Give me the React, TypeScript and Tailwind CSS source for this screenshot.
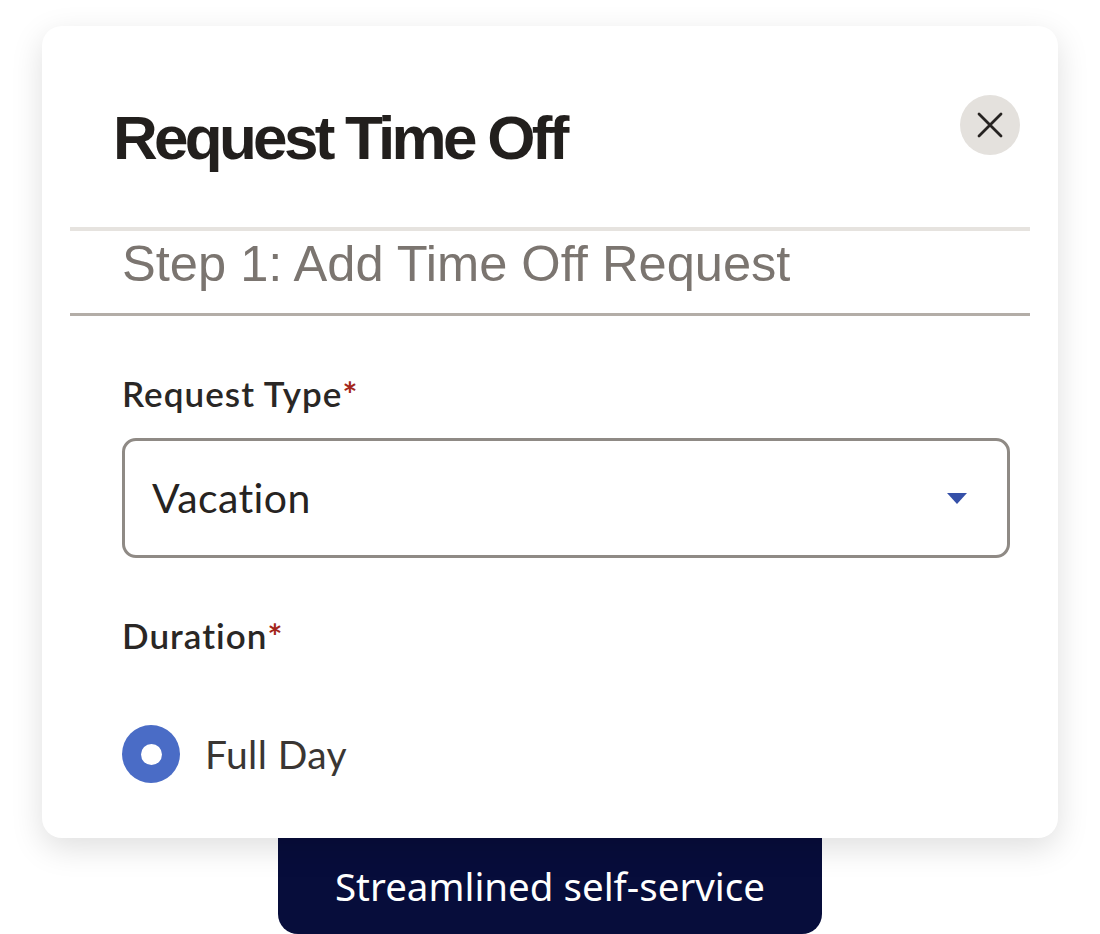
import React from "react";

export default function App() {
  return (
    <div className="w-[1100px] h-[934px] bg-white flex flex-col items-center pt-[26px] overflow-hidden">
      <div className="relative z-10 w-[1016px] h-[812px] bg-white rounded-[20px] shadow-[0_10px_32px_rgba(0,0,0,0.13)] flex flex-col px-[28px]">
        <div className="flex items-start justify-between pt-[69px] pl-[43px] pr-[10px]">
          <h1
            className="text-[62px] leading-[62px] font-bold tracking-[-0.06em] text-[#221f1d] mt-[12px]"
            style={{ fontFamily: '"Liberation Sans", Arial, sans-serif' }}
          >
            Request Time Off
          </h1>
          <button className="w-[60px] h-[60px] rounded-full bg-[#e4e1dd] flex items-center justify-center">
            <svg width="26" height="26" viewBox="0 0 26 26" fill="none">
              <path d="M2 2L24 24M24 2L2 24" stroke="#262321" strokeWidth="2.8" strokeLinecap="round" />
            </svg>
          </button>
        </div>
        <div className="mt-[58px] h-[4px] bg-[#e6e3df]" />
        <div
          className="pl-[52px] pt-[8px] pb-[24px] text-[50.6px] leading-[50px] text-[#7b7570]"
          style={{ fontFamily: '"Liberation Sans", Arial, sans-serif' }}
        >
          Step 1: Add Time Off Request
        </div>
        <div className="h-[3px] bg-[#b3ada7]" />
        <div className="pl-[52px] pr-[20px] flex flex-col" style={{ fontFamily: 'Lato, "Noto Sans", sans-serif' }}>
          <div className="mt-[60px] text-[35px] leading-[34px] font-semibold tracking-[0.03em] text-[#2a2725]">
            Request Type<span className="text-[#a3261b] font-bold">*</span>
          </div>
          <div className="mt-[28px] h-[120px] border-[3px] border-[#8f8a85] rounded-[14px] flex items-center justify-between pl-[27px] pr-[40px]">
            <span className="text-[41px] leading-[40px] tracking-[0.01em] text-[#262321]">Vacation</span>
            <svg width="20" height="11" viewBox="0 0 20 11">
              <path d="M0 0H20L10 11Z" fill="#3550a8" />
            </svg>
          </div>
          <div className="mt-[60px] text-[35px] leading-[34px] font-semibold tracking-[0.03em] text-[#2a2725]">
            Duration<span className="text-[#a3261b] font-bold">*</span>
          </div>
          <div className="mt-[73px] flex items-center gap-[25px]">
            <div className="w-[58px] h-[58px] rounded-full bg-[#4a6cc6] flex items-center justify-center">
              <div className="w-[21px] h-[21px] rounded-full bg-white" />
            </div>
            <span className="text-[39px] leading-[38px] tracking-[0.01em] text-[#3a3633]">Full Day</span>
          </div>
        </div>
      </div>
      <div className="w-[544px] h-[96px] bg-[#070d3b] rounded-b-[20px] flex items-center justify-center">
        <span
          className="text-white text-[38.5px] leading-[38px]"
          style={{ fontFamily: '"Noto Sans", sans-serif' }}
        >
          Streamlined self-service
        </span>
      </div>
    </div>
  );
}
